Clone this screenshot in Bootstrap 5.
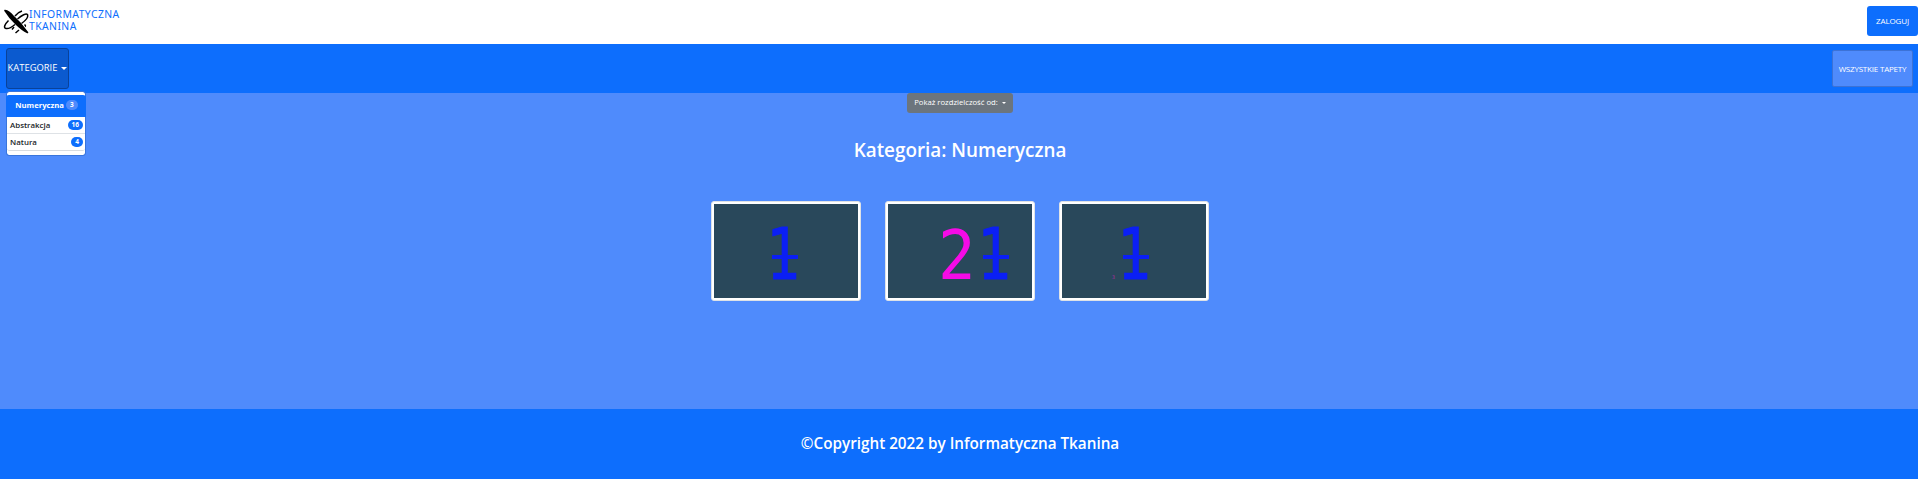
<!DOCTYPE html>
<html lang="pl">
<head>
<meta charset="utf-8">
<meta name="viewport" content="width=device-width, initial-scale=1">
<title>Informatyczna Tkanina</title>
<link href="https://cdn.jsdelivr.net/npm/bootstrap@5.3.0/dist/css/bootstrap.min.css" rel="stylesheet">
<style>
  body { font-family: "Open Sans", "Noto Sans", sans-serif; background: #4f8bfc; height: 479px; overflow: hidden; }
  .top-bar { height: 44px; padding-left: 3px; }
  .brand-name { font: 10.4px/12px "Noto Sans", sans-serif; color: #0d6efd; margin: -4px 0 0 -1px; letter-spacing: .42px; }
  .btn-login { width: 51px; height: 30px; font-size: 8px; font-weight: 500; border-radius: 3px; letter-spacing: -.15px; margin-top: -2px; }
  .menu-bar { height: 49px; padding: 0 5px 0 6px; }
  .btn-cat { width: 63px; height: 41px; margin-top: -1px; font-size: 9.4px; background: #0b5acf; border: 1px solid #0a4299; border-radius: 3px; }
  .btn-cat::after, .btn-res::after { border-width: 3px; border-bottom: 0; margin-left: 4px; vertical-align: 1px; }
  .btn-res::after { border-width: 2.5px; border-bottom: 0; }
  .btn-all { width: 81px; height: 37px; font-size: 8px; font-weight: 500; background: #4f8bfc; border: 1px solid #3c72d6; border-radius: 2px; letter-spacing: -.2px; }
  .cat-menu { left: 0; top: 38px; width: 80px; min-width: 0; height: 65px; padding: 3px 0 0; border: 1px solid #3975dc; border-radius: 3px; font-size: 8px; }
  .cat-menu .list-group-item { height: 17px; padding: 0 2px 0 3px; font-weight: 600; line-height: 10px; font-size: 7.9px; border-width: 0 0 1px; color: #212529; }
  .cat-menu .list-group-item.active { height: 22px; justify-content: center !important; gap: 2px; margin: 0 -1px; font-weight: 700; font-size: 7.7px; border-radius: 3px 3px 0 0; color: #fff; }
  .cat-menu .list-group-item:last-child { border-bottom: 1px solid #d8dce0; border-radius: 0 0 3px 3px; }
  .cat-menu .badge { font-size: 6.5px; padding: 2px 4px; line-height: 6px; }
  .cat-menu .active .badge { background: #4f8bfc !important; }
  .btn-res { width: 106px; height: 20px; font-size: 7.7px; font-weight: 500; border-radius: 3px; }
  .gallery-area { height: 316px; padding-left: 2px; }
  .cat-title { font-size: 18.85px; line-height: 24px; font-weight: 600; margin: 25px 0 39px; }
  .wallpapers { gap: 24px; }
  .wallpaper { width: 150px; height: 100px; padding: 2px; border-radius: 3px; background: #fff; }
  .wallpaper svg { background: #29485b; }
  .page-foot { height: 70px; font-size: 15.28px; font-weight: 600; padding: 0 0 1px 2px; }
  .top-bar, .menu-bar, .gallery-area, .page-foot { white-space: nowrap; }
</style>
</head>
<body>
<header class="top-bar bg-white d-flex align-items-center justify-content-between">
  <a href="#" class="d-flex align-items-center text-decoration-none">
    <svg width="27" height="28" viewBox="0 0 27 28" fill="none" stroke="#000" style="margin-top:-3px">
      <path d="M2 3.500 Q6 4 10 9 L17 16 L24.500 25.500 Q19 23 13 17 Q6 10 2 3.500Z" fill="#000" stroke-width="1.6" stroke-linejoin="round"/>
      <path d="M5.500 13.500 C2 17 0 21 3 21.500 C5.500 22 9 20 12 17.500 M14.500 12 C18 9 24 5 24.700 8 C25.200 10.500 22 14 18.500 16.500" stroke-width="1.5"/>
      <path d="M12 9 C14 6.500 16 5 19 4 M21.500 17.500 Q23 19 22 19.500 M12.500 26 L16 23 M9 22.500 L11 20" stroke-width="1.5"/>
    </svg>
    <span class="brand-name">INFORMATYCZNA<br>TKANINA</span>
  </a>
  <button class="btn btn-primary btn-login p-0 border-0">ZALOGUJ</button>
</header>
<nav class="menu-bar bg-primary d-flex align-items-center justify-content-between">
  <div class="position-relative">
    <button class="btn btn-cat text-white dropdown-toggle d-flex align-items-center justify-content-center p-0">KATEGORIE</button>
    <div class="cat-menu dropdown-menu show mt-1">
      <ul class="list-group list-group-flush">
        <li class="list-group-item active d-flex align-items-center justify-content-between">Numeryczna <span class="badge rounded-pill">3</span></li>
        <li class="list-group-item d-flex align-items-center justify-content-between">Abstrakcja <span class="badge bg-primary rounded-pill">16</span></li>
        <li class="list-group-item d-flex align-items-center justify-content-between">Natura <span class="badge bg-primary rounded-pill">4</span></li>
      </ul>
    </div>
  </div>
  <button class="btn btn-all text-white p-0">WSZYSTKIE TAPETY</button>
</nav>
<main class="gallery-area d-flex flex-column align-items-center text-white">
  <button class="btn btn-secondary btn-res dropdown-toggle p-0 border-0 flex-shrink-0">Pokaż rozdzielczość od:</button>
  <h1 class="cat-title">Kategoria: Numeryczna</h1>
  <div class="wallpapers d-flex">
    <div class="wallpaper img-thumbnail"><svg class="d-block" width="144" height="94" font-family="DejaVu Sans Mono">
      <g transform="translate(58 75)" fill="#0b1ff5"><text font-size="71" transform="scale(.79 1)" x="-7.700" stroke="#0b1ff5" stroke-width=".8">1</text><rect y="-24" width="26" height="4"/></g></svg></div>
    <div class="wallpaper img-thumbnail"><svg class="d-block" width="144" height="94" font-family="DejaVu Sans Mono">
      <text font-size="67" fill="#f50be6" transform="translate(50 75) scale(.93 1)">2</text>
      <g transform="translate(95 75)" fill="#0b1ff5"><text font-size="71" transform="scale(.79 1)" x="-7.700" stroke="#0b1ff5" stroke-width=".8">1</text><rect y="-24" width="26" height="4"/></g></svg></div>
    <div class="wallpaper img-thumbnail"><svg class="d-block" width="144" height="94" font-family="DejaVu Sans Mono">
      <text font-size="5" fill="#a928a0" x="50" y="75">3</text>
      <g transform="translate(61 75)" fill="#0b1ff5"><text font-size="71" transform="scale(.79 1)" x="-7.700" stroke="#0b1ff5" stroke-width=".8">1</text><rect y="-24" width="26" height="4"/></g></svg></div>
  </div>
</main>
<footer class="page-foot bg-primary text-white d-flex align-items-center justify-content-center">©Copyright 2022 by Informatyczna Tkanina</footer>
<script src="https://cdn.jsdelivr.net/npm/bootstrap@5.3.0/dist/js/bootstrap.bundle.min.js"></script>
</body>
</html>
